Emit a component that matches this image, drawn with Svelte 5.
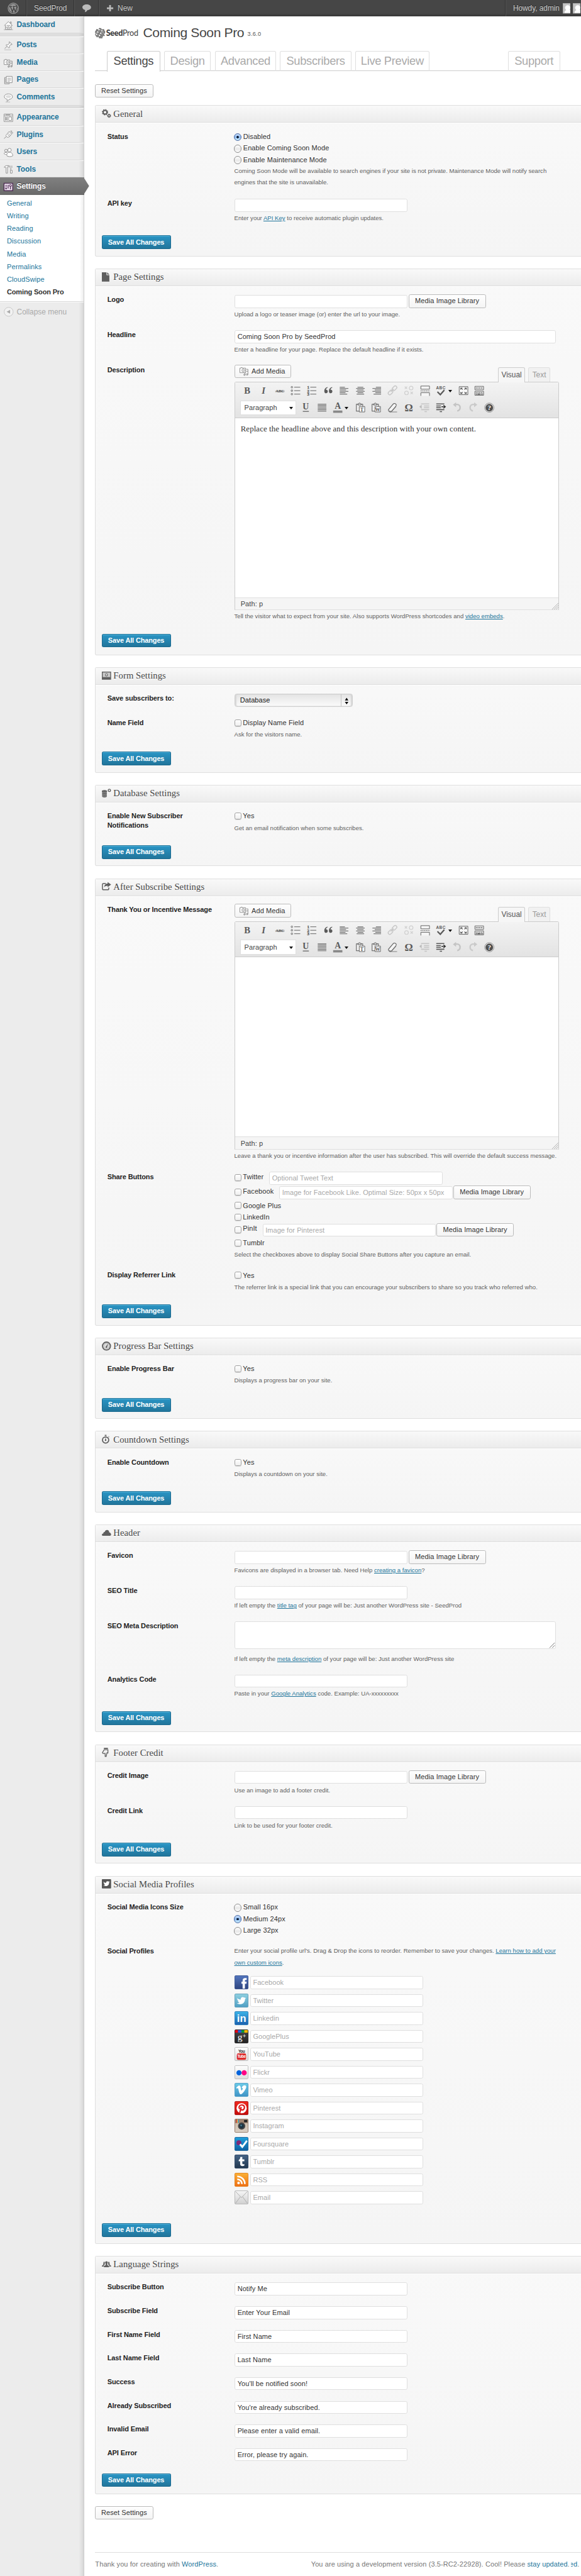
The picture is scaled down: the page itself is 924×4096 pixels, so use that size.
<script>
  const menu = [
    { label: 'Dashboard', icon: 'home', h: 30, sep: true },
    { label: 'Posts', icon: 'pin', h: 30 },
    { label: 'Media', icon: 'media', h: 30 },
    { label: 'Pages', icon: 'pages', h: 30 },
    { label: 'Comments', icon: 'comment', h: 30, sep: true },
    { label: 'Appearance', icon: 'appearance', h: 30 },
    { label: 'Plugins', icon: 'plug', h: 30 },
    { label: 'Users', icon: 'users', h: 30 },
    { label: 'Tools', icon: 'tools', h: 30 }
  ];
  const submenu = ['General', 'Writing', 'Reading', 'Discussion', 'Media', 'Permalinks', 'CloudSwipe', 'Coming Soon Pro'];
  const tabs = [
    { t: 'Settings', w: 92, on: true },
    { t: 'Design', w: 81.5 },
    { t: 'Advanced', w: 106.5 },
    { t: 'Subscribers', w: 123.5 },
    { t: 'Live Preview', w: 128.5 }
  ];

  const d = (...parts) => ({ k: 'desc', parts });
  const a = (text) => ({ a: text });
  const input = (value = '', lib = false, wide = false) => ({ k: 'input', value, lib, wide });
  const check = (label) => ({ k: 'check', label });

  const sections = [
    { title: 'General', icon: 'gears', h: 262, rows: [
      { l: 'Status', h: 116, f: [
        { k: 'radio', label: 'Disabled', on: true }, { k: 'radio', label: 'Enable Coming Soon Mode' }, { k: 'radio', label: 'Enable Maintenance Mode' },
        d('Coming Soon Mode will be available to search engines if your site is not private. Maintenance Mode will notify search'), d('engines that the site is unavailable.')] },
      { l: 'API key', h: 71.5, f: [input(), d('Enter your ', a('API Key'), ' to receive automatic plugin updates.')] }
    ] },
    { title: 'Page Settings', icon: 'page', h: 670, rows: [
      { l: 'Logo', h: 61, f: [input('', true), d('Upload a logo or teaser image (or) enter the url to your image.')] },
      { l: 'Headline', h: 61, f: [input('Coming Soon Pro by SeedProd', false, true), d('Enter a headline for your page. Replace the default headline if it exists.')] },
      { l: 'Description', h: 473, f: [{ k: 'editor', text: 'Replace the headline above and this description with your own content.' },
        d('Tell the visitor what to expect from your site. Also supports WordPress shortcodes and ', a('video embeds'), '.')] }
    ] },
    { title: 'Form Settings', icon: 'form', h: 183, rows: [
      { l: 'Save subscribers to:', h: 42, f: [{ k: 'select', value: 'Database' }] },
      { l: 'Name Field', h: 66.5, f: [check('Display Name Field'), d('Ask for the visitors name.')] }
    ] },
    { title: 'Database Settings', icon: 'db', h: 141, rows: [
      { l: 'Enable New Subscriber Notifications', h: 66.5, f: [check('Yes'), d('Get an email notification when some subscribes.')] }
    ] },
    { title: 'After Subscribe Settings', icon: 'share', h: 775, rows: [
      { l: 'Thank You or Incentive Message', h: 463, f: [{ k: 'editor', text: '' },
        d('Leave a thank you or incentive information after the user has subscribed. This will override the default success message.')] },
      { l: 'Share Buttons', h: 171, f: [
        { k: 'share', label: 'Twitter', ph: 'Optional Tweet Text' },
        { k: 'share', label: 'Facebook', ph: 'Image for Facebook Like. Optimal Size: 50px x 50px', lib: true },
        { k: 'share', label: 'Google Plus' }, { k: 'share', label: 'LinkedIn' },
        { k: 'share', label: 'PinIt', ph: 'Image for Pinterest', lib: true },
        { k: 'share', label: 'Tumblr' },
        d('Select the checkboxes above to display Social Share Buttons after you capture an email.')] },
      { l: 'Display Referrer Link', h: 66.5, f: [check('Yes'), d('The referrer link is a special link that you can encourage your subscribers to share so you track who referred who.')] }
    ] },
    { title: 'Progress Bar Settings', icon: 'gauge', h: 141, rows: [
      { l: 'Enable Progress Bar', h: 66.5, f: [check('Yes'), d('Displays a progress bar on your site.')] }
    ] },
    { title: 'Countdown Settings', icon: 'timer', h: 141, rows: [
      { l: 'Enable Countdown', h: 66.5, f: [check('Yes'), d('Displays a countdown on your site.')] }
    ] },
    { title: 'Header', icon: 'cloud', h: 360, rows: [
      { l: 'Favicon', h: 61, f: [input('', true), d('Favicons are displayed in a browser tab. Need Help ', a('creating a favicon'), '?')] },
      { l: 'SEO Title', h: 61, f: [input(), d('If left empty the ', a('title tag'), ' of your page will be: Just another WordPress site - SeedProd')] },
      { l: 'SEO Meta Description', h: 92, f: [{ k: 'area' }, d('If left empty the ', a('meta description'), ' of your page will be: Just another WordPress site')] },
      { l: 'Analytics Code', h: 71.5, f: [input(), d('Paste in your ', a('Google Analytics'), ' code. Example: UA-xxxxxxxxx')] }
    ] },
    { title: 'Footer Credit', icon: 'thumb', h: 207, rows: [
      { l: 'Credit Image', h: 61, f: [input('', true), d('Use an image to add a footer credit.')] },
      { l: 'Credit Link', h: 71.5, f: [input(), d('Link to be used for your footer credit.')] }
    ] },
    { title: 'Social Media Profiles', icon: 'bird', h: 638, rows: [
      { l: 'Social Media Icons Size', h: 76.5, f: [{ k: 'radio', label: 'Small 16px' }, { k: 'radio', label: 'Medium 24px', on: true }, { k: 'radio', label: 'Large 32px' }] },
      { l: 'Social Profiles', h: 487.5, f: [
        d("Enter your social profile url's. Drag & Drop the icons to reorder. Remember to save your changes. ", a('Learn how to add your')),
        d(a('own custom icons'), '.'), { k: 'social' }] }
    ] },
    { title: 'Language Strings', icon: 'people', h: 413, rows: [
      ['Subscribe Button', 'Notify Me'], ['Subscribe Field', 'Enter Your Email'], ['First Name Field', 'First Name'], ['Last Name Field', 'Last Name'],
      ['Success', "You'll be notified soon!"], ['Already Subscribed', "You're already subscribed."], ['Invalid Email', 'Please enter a valid email.'], ['API Error', 'Error, please try again.']
    ].map(([l, v], i) => ({ l, h: i === 7 ? 51.5 : 41, f: [input(v)] })) }
  ];

  const socials = ['Facebook', 'Twitter', 'Linkedin', 'GooglePlus', 'YouTube', 'Flickr', 'Vimeo', 'Pinterest', 'Instagram', 'Foursquare', 'Tumblr', 'RSS', 'Email'];

  const svg = (w, h, inner, extra = '') => `<svg width="${w}" height="${h}" viewBox="0 0 ${w} ${h}" style="display:block;overflow:visible" ${extra}>${inner}</svg>`;
  const line = 'fill="none" stroke="#8a8a8a" stroke-width="1"';
  const lineW = 'fill="#fff" stroke="#8a8a8a" stroke-width="1"';
  const birdPath = 'M3 6c2 2.2 4.2 3 6.6 3C9.400 6.200 11.200 4.600 13.300 4.600c1.200 0 2 .4 2.700 1.100l2.200-.8-.9 1.800 1.900-.4-1.800 1.900C17.300 14 13.500 17.300 8.700 17.300c-2.300 0-4.200-.6-5.900-1.700 2.100 0 3.700-.5 4.900-1.500-1.600-.2-2.600-1-3.100-2.300h1.500C4.400 11 3.600 9.900 3.500 8.400l1.400.4C3.500 7.700 3 7 3 6z';

  const menuIcons = {
    home: `<path ${lineW} d="M.8 8.500 8 1.500l7.200 7M2.800 7.500v7.500h10.400V7.500M6.500 15v-4.500h3V15M11.500 4V2h1.500v3.500M5 8h6M4.500 10v3M11.500 10v3"/><path d="M0 15.500h16" stroke="#aaa"/>`,
    pin: `<path ${lineW} d="m9.500 1.500 5 4.500-1.500.6-1-.3-2.300 2.800.3 2.400-1.200.8-5-4.600.9-1 2.400.2L10 4.300l-.7-1.200zM5.500 9.500 1.500 13.500"/><path d="M1 15.500h12" stroke="#bbb"/>`,
    media: `<path ${lineW} d="M.5 2.500h2v-1h2v1h6v8H.5z"/><circle cx="6.500" cy="6.500" r="2.500" ${line}/><circle cx="6.500" cy="6.500" r=".8" fill="#888"/><path ${line} d="M11.500 4.500h3v9M11.500 8h3M9.500 14v-4M8 14.500h1.500M13 14h1.500"/><circle cx="8.500" cy="14" r="1.300" ${line}/><circle cx="13" cy="13.500" r="1.300" ${line}/>`,
    pages: `<path ${line} d="M4 3.500H1.500v11h8V13"/><path ${lineW} d="M4.500 1.500h10v11h-10z"/><path stroke="#aaa" d="M6.500 4.500h6M6.500 6.500h6M6.500 8.500h6M6.500 10.500h4M3 5v8"/>`,
    comment: `<path ${lineW} d="M8 1.500c4 0 7 1.900 7 4.700s-3 4.600-6 4.700c-.5 2-2 3-3.800 3.300.9-1 1-2.200.8-3.600C3 10.200 1 8.500 1 6.200 1 3.400 4 1.500 8 1.500z"/><path d="M3 15.500h8" stroke="#bbb"/><ellipse cx="8" cy="6" rx="4.500" ry="2.500" fill="#ddd"/>`,
    appearance: `<path ${lineW} d="M.5 1.500h15v13H.5z"/><path stroke="#888" d="M1 4.500h14M2.500 7.500h4M2.500 9.500h4M2.500 11.500h4M3 6v7M6 6v7"/><path ${line} d="M8.500 6.500h5v6h-5zM3 3h8"/>`,
    plug: `<path ${lineW} d="M5 7.500 9 2.500l.8 1.200L13 1l1.200 1-2.800 3 1 1L15 3.500l.8 1L13 7.500 9.500 11.500c-2 1.300-4 .8-5-.5C3.500 10 3.600 8.600 5 7.500zM4 11.500l-3.500 3M6.500 7.500l3.500 3M8 5.500l3.500 3.500"/>`,
    users: `<circle cx="4" cy="5" r="2.500" ${line}/><circle cx="10" cy="4" r="3" ${lineW}/><path ${lineW} d="M5.500 14c-.8-4 1-6.200 4.500-6.200s6 3 5.500 6.200c-2 1.700-8 1.700-10 0zM5 11.500c-1.500.3-3-.2-4.300-1C.7 8.500 2 7.500 5.500 8"/>`,
    tools: `<path ${lineW} d="M.8 4.500C2 2 3.500 1.500 5 1.500h4v2H6.500v11h-2.500v-10C3 4 2 4 .8 4.500zM11 1.500V5l1 1v3M14 1.500V5l-1 1M11.500 9.500h3v5h-3z"/>`,
    settings: `<path d="M.5 1.500h15v13H.5z" fill="#ecdfee" stroke="#4c2c52" stroke-width="1.500"/><path stroke="#5b3a61" stroke-width="1.500" fill="none" d="M4 4v4M7.500 4v6.500M11.500 7v5"/><circle cx="4" cy="10.500" r="1.500" fill="#5b3a61"/><circle cx="11.500" cy="5.500" r="1.700" fill="none" stroke="#5b3a61" stroke-width="1.300"/>`
  };
  const g = '#5f5f5f';
  const heads = {
    gears: `<circle cx="5.500" cy="6" r="3.300" fill="none" stroke="${g}" stroke-width="2.200"/><circle cx="5.500" cy="6" r="4.700" fill="none" stroke="${g}" stroke-width="1.500" stroke-dasharray="1.900 1.790"/><circle cx="12.500" cy="12" r="2" fill="none" stroke="${g}" stroke-width="1.600"/><circle cx="12.500" cy="12" r="3" fill="none" stroke="${g}" stroke-width="1" stroke-dasharray="1.200 1.150"/>`,
    page: `<path d="M0 0h8v5h5v11H0z" fill="${g}"/><path d="M9.200 0v3.800H13z" fill="${g}"/>`,
    form: `<path d="M0 1h16v14H0z" fill="${g}"/><path d="M1.500 2.500h13v8h-13z" fill="#c9c9c9"/><ellipse cx="8" cy="6.500" rx="1.800" ry="2.200" fill="#eee" stroke="${g}" stroke-width="1.200"/>`,
    db: `<path d="M0 3.500q4.500-2 9 0v2q-1 .8-.5 1.500.8.8 0 1.600-.6.900 0 1.700.5.800 0 1.500v2.500q-4 2-8 0v-2.500q-.6-.8 0-1.500-.6-.8 0-1.700-.6-.8 0-1.600Q.3 6 0 5.500z" fill="${g}"/><path d="M0 6q4.500 1.500 9 0M0 9.300q4.500 1.500 9 0M0 12.300q4.500 1.500 9 0" stroke="#bbb" fill="none" stroke-width=".7"/><circle cx="13" cy="3" r="2" fill="none" stroke="${g}" stroke-width="1.500"/>`,
    share: `<path d="M7 3H3Q1 3 1 5v7q0 2 2 2h7q2 0 2-2v-2" fill="none" stroke="${g}" stroke-width="1.600"/><path d="M4 9.500C4.500 5 7 3.300 10 3.300V.5L16 5l-6 4.500V7C7.500 6.800 5.500 7.500 4 9.500z" fill="${g}"/>`,
    gauge: `<circle cx="8" cy="8" r="6.900" fill="#ddd" stroke="${g}" stroke-width="2"/><circle cx="8" cy="8" r="4.500" fill="none" stroke="#777" stroke-dasharray="1 1.500"/><path d="M10.800 3.800 9.200 9.500A1.400 1.400 0 1 1 7 8.600z" fill="${g}"/>`,
    timer: `<circle cx="6.500" cy="9.500" r="5.400" fill="none" stroke="${g}" stroke-width="1.900"/><path d="M5 .5h3v2H5zM11 2.500l2 1.500-1 1z" fill="${g}"/><path d="M6.500 5.500 7.700 9.500a1.300 1.300 0 1 1-2.400 0z" fill="${g}"/>`,
    cloud: `<path d="M1.500 13Q0 13 0 11.500 0 9.300 2.500 9 2.500 6 5 6.200 6 3 9 3q3.500 0 3.700 4Q16 8 16 11q0 2-1.500 2z" fill="${g}"/>`,
    thumb: `<path d="M3.500 1.200h7" stroke="${g}" stroke-width="2"/><path d="M4 3.500h6.500v5.500H8.800L7.500 15H5.700V10H2L1 8.500z" fill="#eee" stroke="${g}" stroke-width="1.400"/>`,
    bird: `<rect width="16" height="16" rx="1" fill="#555"/><g transform="translate(.7 .3) scale(.68)"><path d="${birdPath}" fill="#fff"/></g>`,
    people: `<circle cx="8" cy="5" r="2.300" fill="${g}"/><path d="M6.500 6h3v3.500l3 1.500v2h-9v-2l3-1.500z" fill="${g}"/><path d="M3 4q1.500-1 2 .500v4L3 10v2H0v-1.500L2.200 9zM13 4q-1.500-1-2 .500v4L13 10v2h3v-1.500L13.800 9z" fill="${g}"/>`
  };

  const T = '#5a5a5a';
  const txt = (x, y, s, t, e = '') => `<text x="${x}" y="${y}" font-family="Liberation Serif, serif" font-weight="bold" font-size="${s}" fill="${T}" text-anchor="middle" ${e}>${t}</text>`;
  const rowsOf = (list) => `<path stroke="${T}" stroke-width="1.100" d="${list.map(([x, w], i) => `M${x} ${4 + i * 2.4}h${w}`).join('')}"/>`;
  const clip = (t) => `<path d="M3 4h11v12H3z" fill="#eee" stroke="${T}" stroke-width="1.100"/><path d="M5.500 5.500h6v-2h-1.500a1.500 1.500 0 0 0-3 0H5.500z" fill="#ddd" stroke="${T}"/><path d="M8 8h9.500v9.500H8z" fill="#fff" stroke="${T}" stroke-width="1"/>${txt(12.7, 16, 9, t)}`;
  const row1 = [
    txt(10, 15.5, 16, 'B'), txt(10, 15.5, 16, 'I', 'font-style="italic"'),
    txt(10, 13.5, 7.5, 'ABC', 'letter-spacing="-.3"') + `<path d="M2 11h16" stroke="${T}" stroke-width=".8"/>`,
    `<g fill="none" stroke="${T}"><circle cx="3.500" cy="4" r="1.400"/><circle cx="3.500" cy="10" r="1.400"/><circle cx="3.500" cy="16" r="1.400"/><path d="M7.500 4H18M7.500 10H18M7.500 16H18"/></g>`,
    [1, 2, 3].map((n, i) => txt(3.5, 6.8 + i * 6, 7.5, n, 'stroke="#555" stroke-width=".3"')).join('') + `<path d="M7 4h10.500M7 10h10.500M7 16h10.500" stroke="${T}"/>`,
    `<path fill="${T}" d="M9 4.500C6.500 5.500 5.800 7 5.800 8.600 7.500 8 9 9.200 9 11.200 9 13.200 7.800 14.500 6 14.500S3 13 3 10.500C3 7 5 4.700 8.600 3.800zM17 4.500c-2.500 1-3.200 2.500-3.200 4.100 1.700-.6 3.200.6 3.200 2.600 0 2-1.200 3.300-3 3.300s-3-1.500-3-4C11 7 13 4.700 16.600 3.800z"/>`,
    rowsOf([[2.5, 9], [2.5, 15], [2.5, 11], [2.5, 15], [2.5, 10], [2.5, 13]]), rowsOf([[5, 10], [2.5, 15], [4.5, 11], [2.5, 15], [5, 10], [3.5, 13]]), rowsOf([[8.5, 9], [2.5, 15], [6.5, 11], [2.5, 15], [7.5, 10], [4.5, 13]]),
    `<g fill="none" stroke="#c6c6c6" stroke-width="1.500"><rect x="9" y="3" width="9" height="5.500" rx="2.700" transform="rotate(-45 13.500 5.700)"/><rect x="2" y="10.500" width="9" height="5.500" rx="2.700" transform="rotate(-45 6.500 13.200)"/><path d="m7 12 5-5"/></g>`,
    `<g fill="none" stroke="#cfcfcf" stroke-width="1.300"><circle cx="14" cy="5.500" r="3.200"/><circle cx="6" cy="14" r="3.200"/><path d="m3 3 4 4M7 3 3 7M13 12l4 4M17 12l-4 4"/></g>`,
    `<path fill="#f5f5f5" stroke="${T}" d="M2.500 7.500V2h15v5.500zM2.500 19v-5.500h15V19"/><path stroke="${T}" stroke-dasharray="2 1" d="M2 10.500h16"/>`,
    `<text x="10" y="8" font-family="Liberation Sans, sans-serif" font-weight="bold" font-size="7" fill="${T}" text-anchor="middle" letter-spacing=".6">ABC</text><path d="m4 12 5 5 7-8" fill="none" stroke="${T}" stroke-width="2.400"/>`,
    `<path fill="#f6f6f6" stroke="${T}" d="M2.500 3h15v14h-15z"/><path fill="${T}" d="M4.500 5H8.500L7.500 6.100 8.800 7.900l-.8.7-1.500-1.700L4.500 8.600zM15.500 5H11.500l1 1.100-1.300 1.800.8.7 1.500-1.700 2 1.700zM4.500 15.500H8.500l-1-1.100L8.800 12.600l-.8-.7-1.500 1.700-2-1.700zM15.500 15.500H11.500l1-1.100-1.300-1.800.8-.7 1.500 1.700 2-1.700z"/>`,
    `<path fill="#f6f6f6" stroke="${T}" d="M2.500 2.500h15v6h-15zM2.500 11h15v7h-15z"/><path stroke="${T}" stroke-width="1.600" stroke-dasharray="2 1" d="M4 5.500h12.500M4 13.500h12.500"/><path stroke="#111" stroke-width="1.500" stroke-dasharray="2 .8 5 .8" d="M4 16h12.500"/>`
  ];
  const row2 = [
    txt(10, 13.5, 15, 'U') + `<path d="M5 16.500h10.500" stroke="${T}" stroke-width="1.300"/>`,
    rowsOf([[2.5, 15], [2.5, 15], [2.5, 15], [2.5, 15], [2.5, 15], [2.5, 15]]),
    txt(10, 12.5, 15, 'A') + `<path d="M2 15h16v4H2z" fill="#888"/>`,
    clip('T'), clip('W'),
    `<path fill="#f4f4f4" stroke="${T}" stroke-width="1.200" d="M3 13.500 11.500 3.500q2-1.700 4.500.5 1.500 2 0 3.500L8 17q-1.800.8-3.500 0-2-1.500-1.500-3.500z"/><path d="M4 13.500q1 3 4 2.200L16 7v2l-7.500 8.500H5z" fill="#777"/><path d="M5 17.500h13" stroke="#777"/>`,
    txt(10, 16, 18, 'Ω'),
    `<path stroke="#c4c4c4" stroke-width="1.700" fill="none" d="M4 3.500h14M9 7h9M9 10h9M4 13.500h14M10 17h4"/><path d="M1 8.500 5 5v7zM5 8.500h3" fill="#bbb"/>`,
    `<path stroke="${T}" stroke-width="1.700" fill="none" d="M2 3.500h14M2 7h8M2 10h8M2 13.500h14M8 17h4"/><path d="M19 8.500 14.500 5v7zM11 7.700h4v1.600h-4z" fill="#333"/>`,
    `<path d="M6 4.500h4a4.500 5 0 0 1 0 11" fill="none" stroke="#c4c4c4" stroke-width="2.600"/><path d="M2.500 5 8 .8v8.500z" fill="#c4c4c4"/>`,
    `<path d="M14 4.500h-4a4.500 5 0 0 0 0 11" fill="none" stroke="#cacaca" stroke-width="2.600"/><path d="M17.500 5 12 .8v8.500z" fill="#cacaca"/>`,
    `<circle cx="10" cy="10" r="8" fill="#eee" stroke="#888"/><circle cx="10" cy="10" r="6.500" fill="#505050"/><text x="10" y="14.200" font-family="Liberation Serif, serif" font-weight="bold" font-size="12" fill="#fff" text-anchor="middle">?</text>`
  ];

  const box = (id, c1, c2, edge, inner) => `<defs><linearGradient id="g${id}" x1="0" y1="0" x2="0" y2="1"><stop offset="0" stop-color="${c1}"/><stop offset="1" stop-color="${c2}"/></linearGradient></defs><rect x=".5" y=".5" width="23" height="23" rx="1.500" fill="url(#g${id})" stroke="${edge}"/>${inner}`;
  const lt = (x, y, s, t, c = '#fff', fam = 'Liberation Sans, sans-serif', e = '') => `<text x="${x}" y="${y}" font-family="${fam}" font-weight="bold" font-size="${s}" fill="${c}" text-anchor="middle" ${e}>${t}</text>`;
  const socialIcons = {
    Facebook: box('fb', '#5275bd', '#2f4580', '#33508f', `<path d="M14 23v-8.500h-2V11h2V9c0-3 1.500-4.500 4.500-4.500H21V8h-1.500c-1 0-1.500.4-1.500 1.500V11h3l-.4 3.500H18V23z" fill="#fff"/>`),
    Twitter: box('tw', '#8fd0e0', '#4f9fc4', '#5e9db8', `<g transform="translate(1.300 1.500) scale(.97)"><path d="${birdPath}" fill="#fff"/></g>`),
    Linkedin: box('li', '#3cb4e8', '#1a5fae', '#2479b8', lt(12.3, 19, 18, 'in')),
    GooglePlus: box('gp', '#4a4a4a', '#222', '#222', `<path d="M1 1h5v4.500H1z" fill="#e01"/><path d="M6 1h6v4.500H6z" fill="#2a5bd7"/><path d="M12 1h5v4.500h-5z" fill="#0a9a3c"/><path d="M17 1h6v4.500h-6z" fill="#fb0"/>` + lt(9.5, 18, 17, 'g', '#fff', 'Liberation Serif, serif', 'style="font-weight:400"') + `<path d="M14.500 11h5M17 8.500v5" stroke="#ddd"/>`),
    YouTube: box('yt', '#fff', '#ddd', '#bbb', lt(12, 9.5, 7, 'You', '#333', 'Liberation Sans, sans-serif', 'letter-spacing="-.5"') + `<rect x="4" y="11" width="16" height="11" rx="2.500" fill="#dd2c2c"/>` + lt(12, 19, 7, 'Tube', '#fff', 'Liberation Sans, sans-serif', 'letter-spacing="-.5"')),
    Flickr: box('fl', '#fff', '#ddd', '#bbb', `<circle cx="7.700" cy="13" r="4.500" fill="#0063dc"/><circle cx="16.700" cy="13" r="4.500" fill="#ff0084"/>`),
    Vimeo: box('vi', '#6bcbe8', '#3f93c6', '#4c9dc4', `<path d="M3 8.200C5 6 6.800 4.300 8.300 4.300c3 .2 2.700 8.700 3.900 8.700.9 0 2.200-2.500 2-3.600-.2-.9-1.100-.8-1.900-.4.900-3.600 3-5.200 5.300-5 2.900.3 3.200 2.800 2.100 5.300C18.200 12.800 13.700 19.700 10.800 19.700 7.200 19.700 7.400 9 5.600 8.900c-.5 0-1.200.5-1.800.9z" fill="#fff"/>`),
    Pinterest: box('pi', '#f02a1f', '#c40a0a', '#a80c0c', `<circle cx="12.300" cy="12.300" r="8.800" fill="#fff"/><path d="M9 20.500 11.500 10M8.800 13.500C6.500 10 8.500 6.500 12.500 6.500c5 0 5.500 4.500 3.700 7.200-1.400 2-4.200 2.200-5.400.4" fill="none" stroke="#d11" stroke-width="2.300"/>`),
    Instagram: box('ig', '#c9b7a4', '#d8cfc4', '#8f7462', `<path d="M1 1h22v6.500H1z" fill="#a08672"/><path d="M3 1h1.500v6H3z" fill="#d33"/><path d="M4.500 1H6v6H4.500z" fill="#ec4"/><path d="M6 1h1.500v6H6z" fill="#39c"/><rect x="16.500" y="2" width="5.500" height="4" fill="#222"/><circle cx="12.300" cy="12.500" r="6.300" fill="#444"/><circle cx="12.300" cy="12.500" r="3.800" fill="#1b3442"/><circle cx="11.500" cy="11.500" r="1.500" fill="#4d7f92"/>`),
    Foursquare: box('fs', '#1fa0dc', '#0e5fa0', '#135f98', `<path d="M4 12 12 20.500l8-8.500-4-4z" fill="#1384c8"/><circle cx="7.500" cy="10" r="4.300" fill="#7a2a78"/><path d="m9.500 12.500 4 4.500L21.500 6.500" fill="none" stroke="#fff" stroke-width="3.200"/>`),
    Tumblr: box('tu', '#456486', '#22384f', '#2a4260', `<path d="M10 4h3.500v4.300H17v3.200h-3.500V15c0 1.800 1.500 2 3.500 1v3.200c-4 1.700-7.300.6-7.300-3v-4.700H7.300V9C9 8.500 9.800 7 10 4z" fill="#fff"/>`),
    RSS: box('rs', '#fbb034', '#ee6f14', '#e0811d', `<circle cx="7" cy="17.500" r="2.300" fill="#fff"/><path d="M4.700 11.200a8 8 0 0 1 8.200 8.200M4.700 6.200a13 13 0 0 1 13.200 13.200" fill="none" stroke="#fff" stroke-width="2.800"/>`),
    Email: box('em', '#f6f6f6', '#d0d0d0', '#b5b5b5', `<path d="m1.500 1.500 10.500 11 10.500-11M1.500 22.500 10 11M22.500 22.500 14 11" fill="none" stroke="#aaa"/>`)
  };

  const wp = svg(20, 20, `<circle cx="10" cy="10" r="9" fill="none" stroke="#999" stroke-width="1.300"/><circle cx="10" cy="10" r="7.500" fill="#999"/><path d="M3.500 6.800h4.300M9 6.800h5M5 7l4 10.500M8 17l2.500-7M10 7l3.700 10M13.500 16.500l2.800-8.500Q14.500 6 15 4.500" fill="none" stroke="#464646" stroke-width="1.700"/>`);
  const seed = (() => {
    let s = '';
    for (let i = 0; i < 9; i++) for (let j = 0; j < 9; j++) {
      const x = j * 2 + (i % 2), y = i * 2 + 1.5;
      if (Math.hypot(x - 9, y - 10) > 9 || (i + 2 * j) % 7 === 0) continue;
      s += `<ellipse cx="${x}" cy="${y}" rx="1.150" ry=".75" transform="rotate(${(i * 50 + j * 37) % 180} ${x} ${y})"/>`;
    }
    return svg(18, 20, `<g fill="#3c3c3c">${s}</g>`);
  })();
</script>

{#snippet lib()}<button class="btn lib">Media Image Library</button>{/snippet}

{#snippet editor(text)}
  <div class="edtop">
    <button class="btn add"><i>{@html svg(16, 16, menuIcons.media)}</i>Add Media</button>
    <div class="edtabs"><span class="on">Visual</span><span>Text</span></div>
  </div>
  <div class="editor">
    <div class="toolbar">
      <div class="trow">
        {#each row1 as ic, i}
          <span class="tb" class:drop={i === 12}>{@html svg(20, 20, ic)}{#if i === 12}<b class="arr"></b>{/if}</span>
        {/each}
      </div>
      <div class="trow">
        <span class="para">Paragraph<b class="arr"></b></span>
        {#each row2 as ic, i}
          <span class="tb" class:drop={i === 2}>{@html svg(20, 20, ic)}{#if i === 2}<b class="arr"></b>{/if}</span>
        {/each}
      </div>
    </div>
    <div class="canvas">{text}</div>
    <div class="status">Path: p<i>{@html svg(12, 12, '<path d="M1 12 12 1M4.500 12 12 4.500M8 12l4-4" stroke="#aaa"/>')}</i></div>
  </div>
{/snippet}

<div class="page">
  <header class="bar">
    <span class="cell" style:width="45.5px"><i class="wp">{@html wp}</i></span>
    <span class="cell name" style:width="83.5px">SeedProd</span>
    <span class="cell" style:width="42px"><i class="bub">{@html svg(15, 14, '<path d="M7.500 0C11.600 0 15 2 15 5s-3 5-6.500 5c-.8 2-2 3-4.500 3.500C5 12.500 5 11 4.500 9.600 2 9 0 7.500 0 5c0-3 3.400-5 7.500-5z" fill="#bbb"/>')}</i></span>
    <span class="new"><i>{@html svg(11, 11, '<path d="M5.500 0v11M0 5.500h11" stroke="#bbb" stroke-width="3"/>')}</i>New</span>
    <span class="howdy">Howdy, admin
      {#each [0, 1] as n (n)}<i>{@html svg(13, 18, '<path d="M0 0h13v18H0z" fill="#ababab"/><path d="M1 1h12v16H1z" fill="#c4c4c4"/><circle cx="8.500" cy="8" r="4.500" fill="#fff"/><path d="M3 17c0-4 3-5 5-5.500h5V17z" fill="#fff"/>')}</i>{/each}
    </span>
  </header>

  <div class="cols">
    <nav class="side">
      <ul class="menu">
        {#each menu as m}
          <li style:height="{m.h}px"><i>{@html svg(16, 16, menuIcons[m.icon])}</i>{m.label}</li>
          {#if m.sep}<li class="sep"></li>{/if}
        {/each}
        <li class="cur"><i>{@html svg(16, 16, menuIcons.settings)}</i>Settings
          <em>{@html svg(10, 30, '<defs><linearGradient id="ar" x1="0" y1="0" x2="0" y2="1"><stop offset="0" stop-color="#808080"/><stop offset="1" stop-color="#6a6a6a"/></linearGradient></defs><path d="M0 0 9.500 15 0 30z" fill="url(#ar)"/>')}</em>
        </li>
      </ul>
      <ul class="sub">
        {#each submenu as s, i}<li class:on={i === 7}>{s}</li>{/each}
      </ul>
      <div class="collapse"><i>{@html svg(17, 17, '<circle cx="8.500" cy="8.500" r="7.800" fill="#f2f2f2" stroke="#c4c4c4"/><path d="m5 8.500 6-3.200v6.400z" fill="#aaa"/>')}</i>Collapse menu</div>
    </nav>

    <main>
      <div class="title">
        <i>{@html seed}</i><span class="brand"><b>Seed</b>Prod</span><h1>Coming Soon Pro</h1><small>3.6.0</small>
      </div>
      <div class="tabs">
        {#each tabs as t}<span class="tab" class:on={t.on} style:width="{t.w}px">{t.t}</span>{/each}
        <span class="tab support" style:width="90.5px">Support</span>
      </div>
      <button class="btn reset">Reset Settings</button>

      {#each sections as s}
        <section style:height="{s.h}px">
          <h3><i>{@html svg(16, 16, heads[s.icon])}</i>{s.title}</h3>
          <div class="rows">
            {#each s.rows as r}
              <div class="row" style:height="{r.h}px">
                <div class="label">{r.l}</div>
                <div class="field">
                  {#each r.f as f}
                    {#if f.k === 'desc'}
                      <p class="desc">{#each f.parts as p}{#if p.a}<a href="#top">{p.a}</a>{:else}{p}{/if}{/each}</p>
                    {:else if f.k === 'radio'}
                      <div class="radio"><i class:on={f.on}></i>{f.label}</div>
                    {:else if f.k === 'check'}
                      <div class="check"><i></i>{f.label}</div>
                    {:else if f.k === 'input'}
                      <div class="inrow"><span class="in" class:wide={f.wide}>{f.value}</span>{#if f.lib}{@render lib()}{/if}</div>
                    {:else if f.k === 'area'}
                      <div class="area">{@html svg(9, 9, '<path d="M0 9 9 0M4.500 9 9 4.500" stroke="#666"/>')}</div>
                    {:else if f.k === 'select'}
                      <div class="select">{f.value}<i>{@html svg(18, 23, '<path d="M6 10.500 9 6l3 4.500zM6 13l3 4.500 3-4.500z"/>')}</i></div>
                    {:else if f.k === 'share'}
                      <div class="share" class:tall={f.ph}><i></i><span>{f.label}</span>{#if f.ph}<span class="in ph">{f.ph}</span>{/if}{#if f.lib}{@render lib()}{/if}</div>
                    {:else if f.k === 'editor'}
                      {@render editor(f.text)}
                    {:else if f.k === 'social'}
                      <ul class="social">
                        {#each socials as n}<li>{@html svg(24, 24, socialIcons[n])}<span class="in ph">{n}</span></li>{/each}
                      </ul>
                    {/if}
                  {/each}
                </div>
              </div>
            {/each}
          </div>
          <button class="save">Save All Changes</button>
        </section>
      {/each}

      <button class="btn reset last">Reset Settings</button>
      <footer>
        <span>Thank you for creating with <a href="#top">WordPress</a>.</span>
        <span class="ver">You are using a development version (3.5-RC2-22928). Cool! Please <a href="#top">stay updated</a>.</span>
        <span class="rest"><a href="#top">ed</a>.</span>
      </footer>
    </main>
  </div>
</div>

<style>
  :global(html), :global(body) { margin: 0; overflow: hidden; background: #fff; }
  .page { zoom: 0.9174; width: 1007.3px; height: 4465px; overflow: hidden; font: 12px/20px "Liberation Sans", Arial, sans-serif; color: #333; background: #fff; letter-spacing: .1px; }
  .page :global(*) { box-sizing: border-box; }
  i, em { font-style: normal; display: block; flex: none; }
  ul { list-style: none; margin: 0; padding: 0; }
  a { color: #21759b; }
  button { font: inherit; letter-spacing: inherit; margin: 0; white-space: nowrap; }

  .bar { height: 28px; display: flex; align-items: center; background: linear-gradient(#464646 0, #464646 23px, #373737 28px); color: #ccc; font-size: 13px; letter-spacing: 0; text-shadow: 0 -1px 0 #222; }
  .cell { height: 28px; border-right: 1px solid #333; box-shadow: 1px 0 #555; display: flex; align-items: center; }
  .wp { margin-left: 13px; }
  .name { padding-left: 13.5px; letter-spacing: -.1px; }
  .bub { margin-left: 14px; margin-top: 2px; }
  .new { display: flex; align-items: center; gap: 8px; padding-left: 14px; }
  .howdy { margin-left: auto; width: 131.500px; height: 28px; display: flex; align-items: center; border-left: 1px solid #333; box-shadow: inset 1px 0 #555; padding-left: 12.500px; white-space: nowrap; letter-spacing: -.05px; }
  .howdy i { margin-left: 4px; }
  .howdy i:first-of-type { margin-left: 6px; }

  .cols { display: flex; height: 4437px; }
  .side { width: 146px; flex: none; position: relative; z-index: 1; background: linear-gradient(90deg, transparent 137px, rgba(0,0,0,.09) 145px), #ececec; border-right: 1px solid #ccc; }
  .menu li { display: flex; align-items: center; color: #21759b; font-weight: bold; font-size: 13px; letter-spacing: -.12px; border-top: 1px solid #f9f9f9; border-bottom: 1px solid #d9d9d9; }
  .menu li i { width: 16px; margin: 2px 6px 0 7px; }
  .menu li.sep { height: 5px; background: rgba(0,0,0,.06); border: 0; border-bottom: 1px solid #d9d9d9; }
  .menu li.cur { position: relative; height: 30px; color: #fff; background: linear-gradient(#808080, #6a6a6a); border: 0; text-shadow: 0 -1px 0 #333; width: 146px; }
  .menu em { position: absolute; left: 145.500px; top: 0; }
  .sub { height: 185px; padding: 3px 0 0 12px; background: linear-gradient(90deg, transparent 138px, rgba(0,0,0,.07) 145px), #fff; border-bottom: 1px solid #d9d9d9; color: #21759b; }
  .sub li { height: 22.050px; line-height: 22px; }
  .sub li.on { color: #333; font-weight: bold; letter-spacing: -.17px; }
  .collapse { height: 35px; display: flex; align-items: center; gap: 6px; padding-left: 6px; color: #aaa; font-size: 13px; letter-spacing: 0; border-top: 1px solid #f9f9f9; }

  main { flex: 1; min-width: 0; padding-left: 19px; }
  .title { display: flex; align-items: center; height: 60px; }
  .title i { margin-top: 1px; }
  .brand { width: 65px; padding-left: 1px; font-family: Lato, sans-serif; font-size: 13.700px; letter-spacing: -.35px; color: #3c3c3c; }
  .brand b { font-weight: 900; }
  h1 { margin: 0 0 4px; width: 181px; white-space: nowrap; font-size: 23px; font-weight: 400; line-height: 30px; letter-spacing: -.42px; color: #464646; }
  small { font-size: 10px; letter-spacing: .3px; margin-top: 3px; color: #555; }
  .tabs { display: flex; height: 35.500px; border-bottom: 1px solid #ccc; padding-left: 20.500px; gap: 6.700px; }
  .tab { height: 35px; border: 1px solid #dfdfdf; border-bottom: 0; border-radius: 3px 3px 0 0; text-align: center; font-size: 20px; line-height: 33px; letter-spacing: -.35px; color: #aaa; white-space: nowrap; }
  .tab.on { height: 36.500px; color: #464646; border-color: #ccc; background: #fff; }
  .support { margin-left: auto; margin-right: 36.500px; }

  .btn { display: block; height: 23.500px; padding: 0 10px; font-size: 12px; line-height: 21px; color: #333; border: 1px solid #bbb; border-radius: 3px; background: linear-gradient(#fefefe, #f4f4f4); box-shadow: inset 0 1px 0 #fff; }
  .reset { width: 100.500px; margin: 22.500px 0 13px; padding: 0; }
  .reset.last { margin: -.500px 0 0; }

  section { border: 1px solid #dfdfdf; border-right: 0; border-radius: 3px 0 0 3px; margin-bottom: 21px; background: linear-gradient(#f9f9f9, #f5f5f5); }
  h3 { margin: 0; height: 29.500px; display: flex; align-items: center; padding-left: 10px; background: linear-gradient(#f9f9f9, #ececec); border-bottom: 1px solid #dfdfdf; box-shadow: 0 1px 0 #fff; font: 400 16px/28px "Liberation Serif", serif; letter-spacing: .07px; color: #464646; text-shadow: 0 1px 0 #fff; }
  h3 i { margin: -2px 4.500px 0 0; }
  .rows { padding: 7.500px 0 0 20px; }
  .row { display: grid; grid-template-columns: 220px 1fr; }
  .label { padding-top: 8px; width: 190px; font-weight: bold; line-height: 16px; letter-spacing: -.12px; color: #222; }
  .field { padding-top: 6px; min-width: 0; white-space: nowrap; }
  .desc { margin: 0; height: 20px; font-size: 10.450px; line-height: 20.600px; letter-spacing: .01px; color: #5f5f5f; }
  .radio, .check { display: flex; align-items: center; height: 20.100px; }
  .check { height: 20.800px; padding-bottom: .800px; }
  .radio i { width: 14px; height: 14px; margin: 2px 2.500px 0 -1px; border-radius: 50%; border: 1px solid #8f8f8f; background: linear-gradient(#fff, #e8e8e8 55%, #fff); }
  .radio i.on { border-color: #4a6aa5; background: radial-gradient(circle at 50% 50%, #0b1b33 0 1.700px, transparent 2.300px), linear-gradient(#c9defa, #8db9ee 50%, #cdf0ff); }
  .check i, .share i { width: 12px; height: 12px; margin-right: 3px; border: 1px solid #a0a0a0; border-radius: 3px; background: linear-gradient(#fff, #eee); box-shadow: 0 1px 0 rgba(0,0,0,.12); }
  .in { display: block; flex: none; width: 299.800px; height: 22.300px; padding: 0 3.500px; line-height: 20px; font-size: 12px; background: #fff; border: 1px solid #dfdfdf; border-radius: 3px; color: #333; white-space: nowrap; }
  .in.wide { width: 556.800px; }
  .in.ph { color: #a9a9a9; letter-spacing: .06px; }
  .inrow { display: flex; padding: 2px 0 0 1px; margin-bottom: 1.500px; height: 24.300px; }
  .lib { margin: -1.200px 0 0 1.300px; width: 134px; padding: 0; flex: none; }
  .area { margin: 2px 0 8px 1px; width: 556.800px; height: 47.500px; background: #fff; border: 1px solid #dfdfdf; border-radius: 3px; display: flex; align-items: flex-end; justify-content: flex-end; padding: 1px; }
  .select { margin: 1.500px 0 0 1px; width: 204px; height: 23.500px; display: flex; justify-content: space-between; line-height: 21px; padding-left: 8px; color: #111; border: 1px solid #cfcfcf; border-radius: 4px; background: linear-gradient(#e4e4e4, #fbfbfb); box-shadow: inset 2px 0 2px #d4d4d4, inset -2px 0 2px #d4d4d4; }
  .select i { border-left: 1px solid #c4c4c4; height: 21.500px; }
  .share { display: flex; height: 20px; align-items: flex-start; }
  .share i { margin-top: 4px; }
  .share.tall { height: 25px; }
  .share.tall i { margin-top: 6px; }
  .share .in { margin: 1.700px 0 0 10px; }
  .share .lib { margin-top: .500px; }

  .edtop { display: flex; justify-content: space-between; width: 547.500px; height: 30.300px; padding-top: .500px; }
  .add { width: 99px; padding: 0 0 0 8px; display: flex; align-items: center; gap: 5px; }
  .edtabs { display: flex; gap: 5.500px; padding-top: 4.500px; font-size: 13px; letter-spacing: 0; }
  .edtabs span { height: 25.300px; line-height: 25px; padding: 0 5px; border: 1px solid #dfdfdf; border-bottom: 0; border-radius: 3px 3px 0 0; color: #999; background: #f1f1f1; width: 37.500px; text-align: center; }
  .edtabs .on { width: 47.500px; height: 26.500px; border-color: #ccc; background: #f6f6f6; color: #555; position: relative; }
  .editor { width: 562.500px; height: 396px; margin-bottom: 1px; display: flex; flex-direction: column; border: 1px solid #ccc; border-bottom-color: #dfdfdf; border-radius: 3px 3px 0 0; }
  .toolbar { height: 61.500px; flex: none; background: linear-gradient(#f3f3f3, #e3e3e3); border-bottom: 1px solid #ccc; }
  .trow { height: 29.300px; display: flex; align-items: center; padding-left: 7.800px; }
  .tb { width: 28px; height: 20px; padding-left: 4px; display: flex; align-items: center; flex: none; }
  .tb.drop { width: 38.600px; }
  .arr { border: 4px solid transparent; border-top: 5px solid #111; border-bottom: 0; width: 0; height: 0; display: block; margin: 1px 0 0 2px; flex: none; }
  .para { width: 97px; height: 25.500px; margin: 0 2.500px 0 1.500px; padding: 0 4px 0 6px; display: flex; align-items: center; justify-content: space-between; background: #fff; border: 1px solid #dfdfdf; color: #444; }
  .canvas { flex: 1; background: #fff; padding: 10.500px 10px; font: 14px/19px "Liberation Serif", serif; letter-spacing: .12px; color: #333; }
  .status { height: 21.500px; flex: none; border-top: 1px solid #dfdfdf; background: #f5f5f5; padding-left: 10px; line-height: 20px; color: #444; display: flex; justify-content: space-between; align-items: flex-end; }

  .social { padding-top: 6.500px; }
  .social li { height: 31.050px; padding-top: 6px; display: flex; align-items: flex-start; }
  .social .in { margin: 1px 0 0 4px; }

  .save { display: block; margin-left: 10px; width: 120px; height: 23.700px; padding: 0; font-weight: bold; font-size: 12px; letter-spacing: -.16px; line-height: 21px; color: #fff; border: 1px solid #1b6a90; border-top-color: #21759b; border-radius: 3px; background: linear-gradient(#2a95c5, #21759b); box-shadow: inset 0 1px 0 rgba(120,200,230,.5); }

  footer { margin-top: 56px; height: 40px; display: flex; border-top: 1px solid #dfdfdf; padding-top: 10.500px; color: #777; white-space: nowrap; }
  footer a { text-decoration: none; }
  .ver { margin-left: auto; }
  .rest { width: 14.500px; margin: 0 3px 0 2.500px; overflow: hidden; display: flex; justify-content: flex-end; }
</style>
